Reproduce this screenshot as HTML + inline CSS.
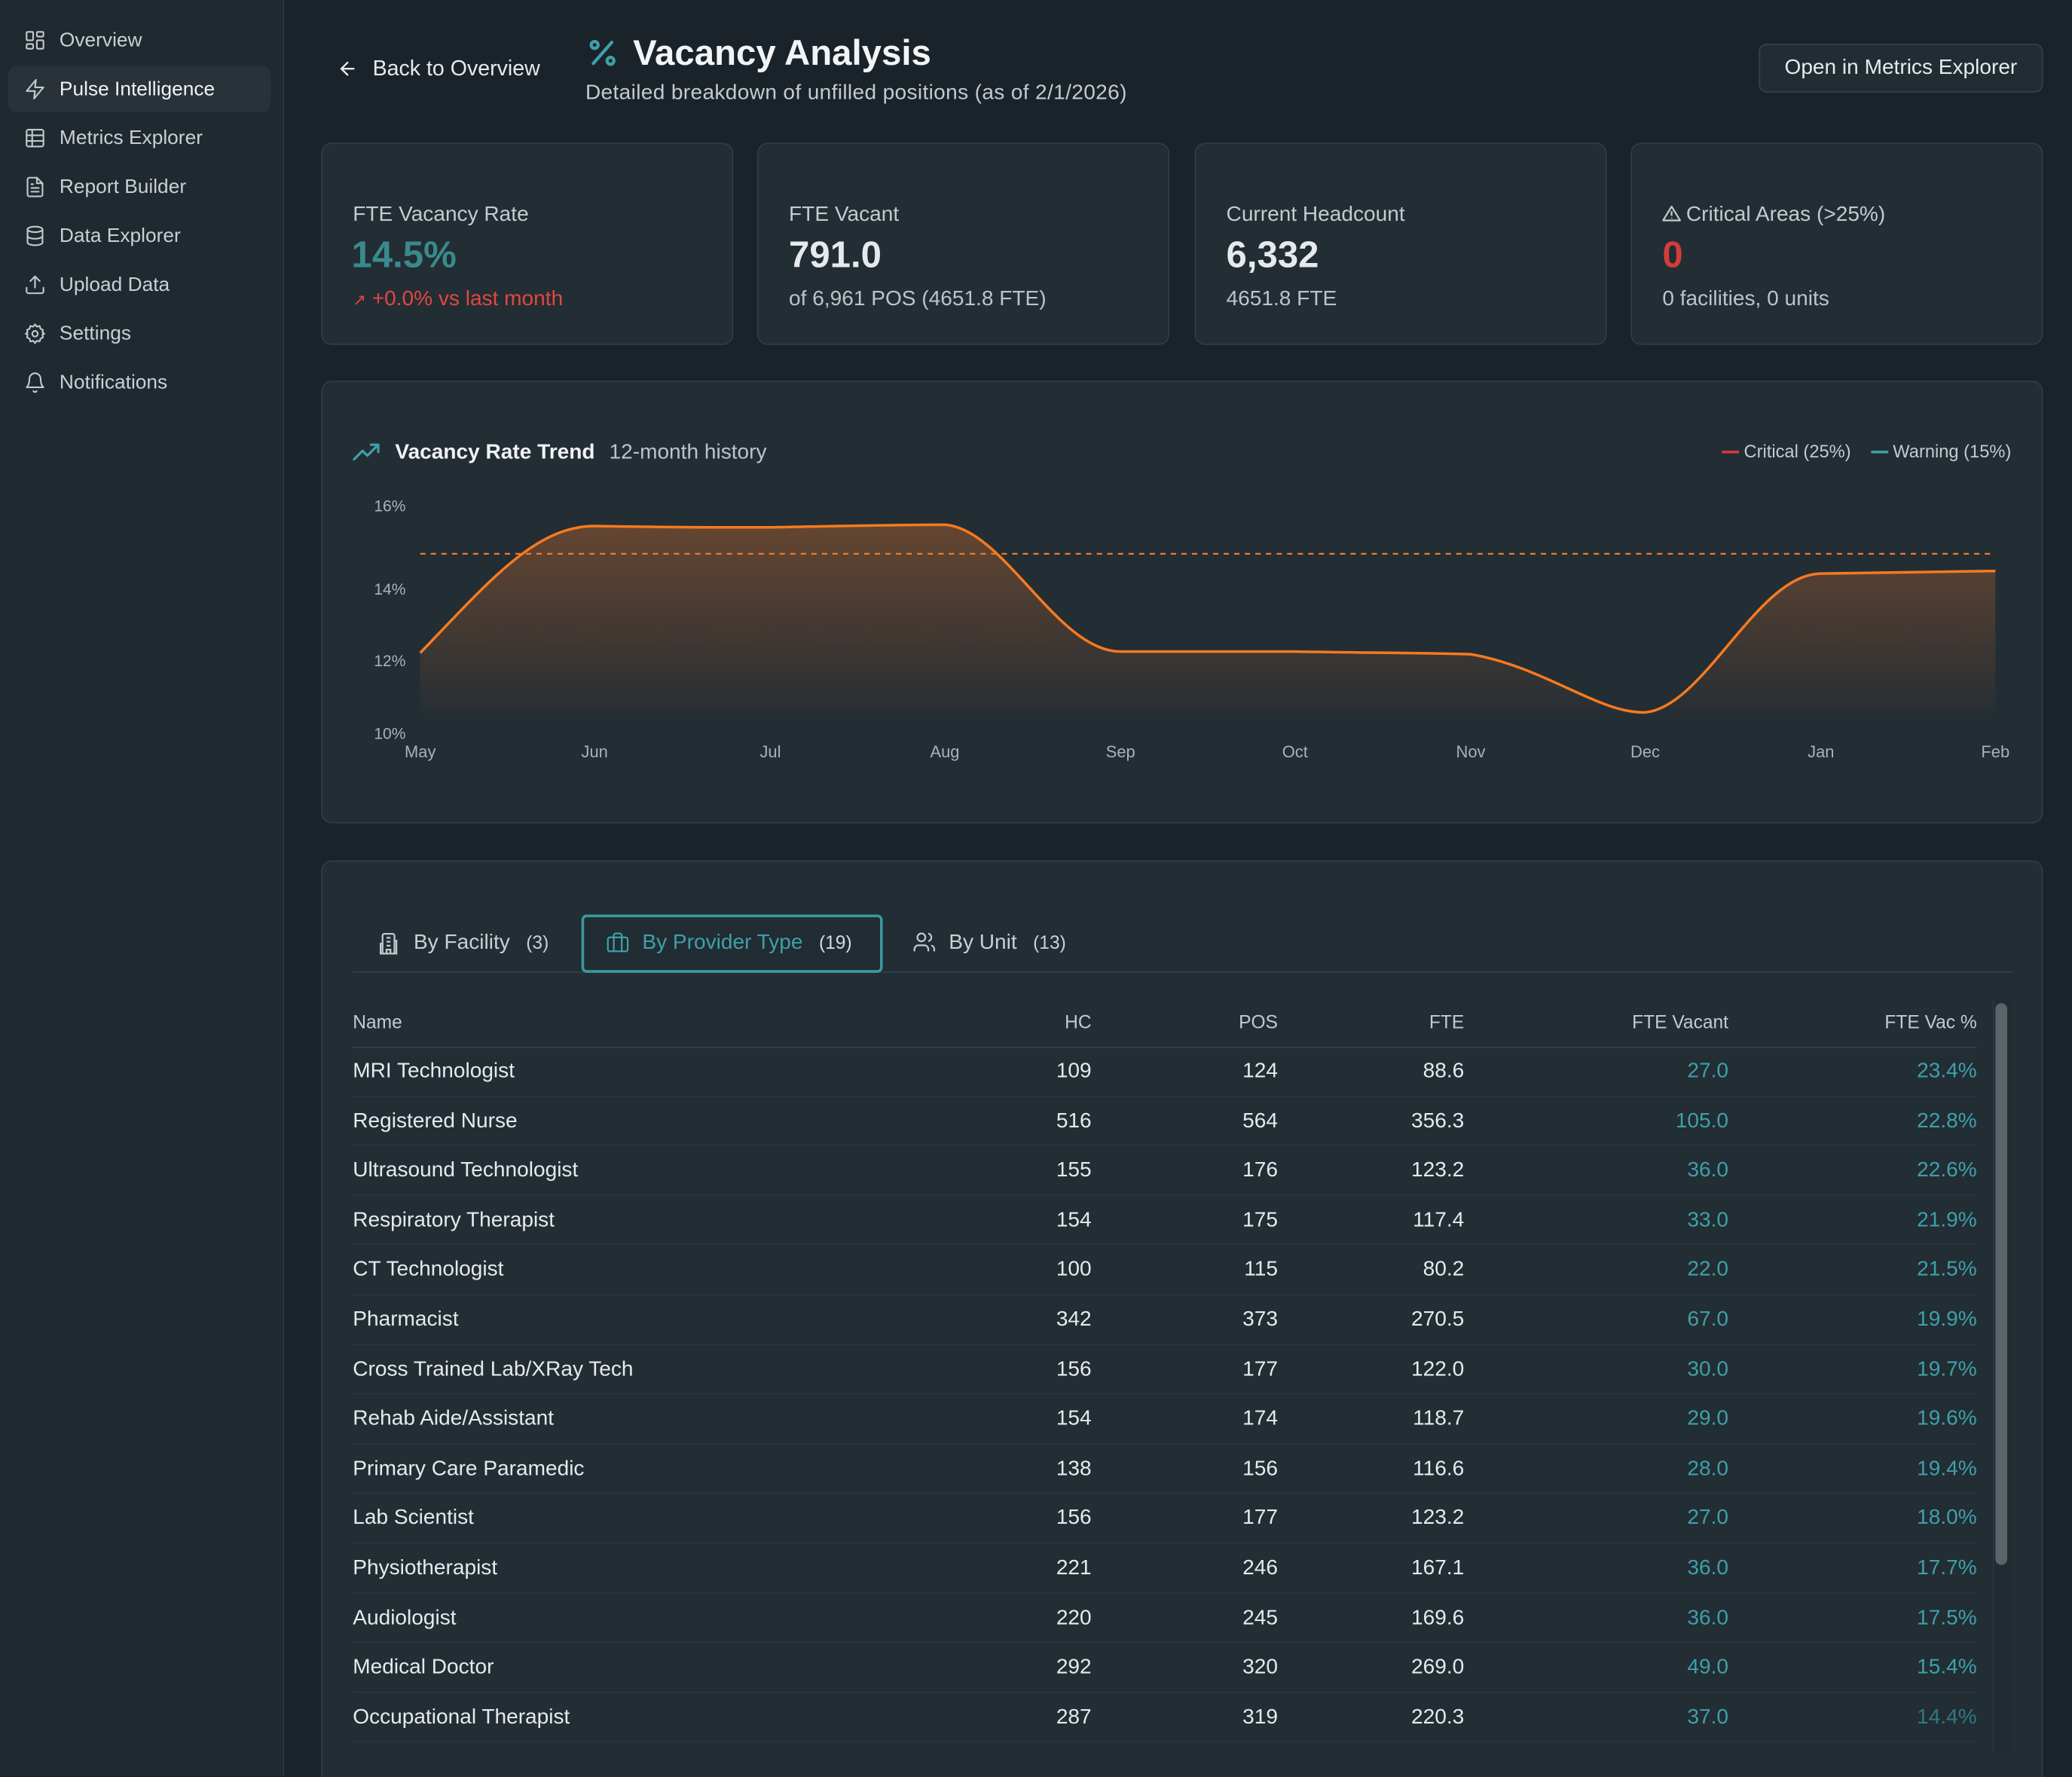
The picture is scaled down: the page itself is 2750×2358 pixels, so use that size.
<!DOCTYPE html>
<html><head><meta charset="utf-8"><style>
*{box-sizing:border-box;margin:0;padding:0}
html,body{width:2750px;height:2358px;overflow:hidden;background:#1b232a}
#w{width:1568px;height:1344px;transform:scale(1.75383);transform-origin:0 0;position:relative;font-family:"Liberation Sans",sans-serif;color:#e6eaec;background:#1b232a}
.a{position:absolute}
.sb{left:0;top:0;width:215px;height:1344px;background:#1f292f;border-right:1px solid #2c373e}
.nav{position:absolute;left:6px;width:199px;height:35px;display:flex;align-items:center;padding-left:12px;font-size:15px;color:#c9d0d4}
.nav svg{width:17px;height:17px;margin-right:10px;fill:none;stroke:#c3cace;stroke-width:1.7;stroke-linecap:round;stroke-linejoin:round}
.nav.act{background:#283238;border-radius:7px;color:#f0f3f4}
.card{background:#232d34;border:1px solid #303c44;border-radius:8px}
.kl{font-size:16px;color:#c3cbcf}
.kv{font-size:28px;font-weight:bold}
.ks{font-size:16px;color:#bcc4c9}
.row{position:absolute;left:267px;width:1229px;height:37.6px;border-bottom:1px solid #2b363d;font-size:16px}
.row span{position:absolute;top:10px}
.c1{left:0}.c2{right:670px}.c3{right:529px}.c4{right:388px}.c5{right:188px;color:#3ea0aa}.c6{right:0;color:#3ea0aa}
.hd span{color:#c3cbcf;font-size:14px}
</style></head><body><div id="w">
<div class="a sb">
 <div class="nav" style="top:13px"><svg viewBox="0 0 24 24"><rect x="3" y="3" width="7" height="9" rx="1"/><rect x="14" y="3" width="7" height="5" rx="1"/><rect x="14" y="12" width="7" height="9" rx="1"/><rect x="3" y="16" width="7" height="5" rx="1"/></svg>Overview</div>
 <div class="nav act" style="top:50px"><svg viewBox="0 0 24 24"><path d="M13 2L3 14h9l-1 8 10-12h-9l1-8z"/></svg>Pulse Intelligence</div>
 <div class="nav" style="top:87px"><svg viewBox="0 0 24 24"><rect x="3" y="3" width="18" height="18" rx="2"/><path d="M3 9h18M3 15h18M9 3v18"/></svg>Metrics Explorer</div>
 <div class="nav" style="top:124px"><svg viewBox="0 0 24 24"><path d="M14 2H6a2 2 0 0 0-2 2v16a2 2 0 0 0 2 2h12a2 2 0 0 0 2-2V8z"/><path d="M14 2v6h6M8 13h8M8 17h8M8 9h2"/></svg>Report Builder</div>
 <div class="nav" style="top:161px"><svg viewBox="0 0 24 24"><ellipse cx="12" cy="5" rx="8" ry="3"/><path d="M4 5v14c0 1.7 3.6 3 8 3s8-1.3 8-3V5M4 12c0 1.7 3.6 3 8 3s8-1.3 8-3"/></svg>Data Explorer</div>
 <div class="nav" style="top:198px"><svg viewBox="0 0 24 24"><path d="M21 15v4a2 2 0 0 1-2 2H5a2 2 0 0 1-2-2v-4M17 8l-5-5-5 5M12 3v12"/></svg>Upload Data</div>
 <div class="nav" style="top:235px"><svg viewBox="0 0 24 24"><circle cx="12" cy="12" r="3"/><path d="M12 2l2 2.5 3-.8.8 3L20.5 8 20 11l2 1-2 1 .5 3-2.7 1.3-.8 3-3-.8L12 22l-2-2.5-3 .8-.8-3L3.5 16 4 13l-2-1 2-1-.5-3 2.7-1.3.8-3 3 .8z"/></svg>Settings</div>
 <div class="nav" style="top:272px"><svg viewBox="0 0 24 24"><path d="M6 8a6 6 0 0 1 12 0c0 7 3 9 3 9H3s3-2 3-9M10.3 21a1.9 1.9 0 0 0 3.4 0"/></svg>Notifications</div>
</div>

<svg class="a" style="left:255px;top:44px" width="16" height="16" viewBox="0 0 24 24" fill="none" stroke="#e6eaec" stroke-width="2" stroke-linecap="round"><path d="M19 12H5M12 19l-7-7 7-7"/></svg>
<div class="a" style="left:282px;top:43px;font-size:16.3px">Back to Overview</div>
<svg class="a" style="left:445px;top:29px" width="22" height="22" viewBox="0 0 22 22" fill="none" stroke="#3ea0aa" stroke-width="2.4" stroke-linecap="round"><path d="M18 3L4 19"/><circle cx="5" cy="5" r="2.6"/><circle cx="17" cy="17" r="2.6"/></svg>
<div class="a" style="left:479px;top:25px;font-size:27px;font-weight:bold;color:#f2f4f5">Vacancy Analysis</div>
<div class="a" style="left:443px;top:62px;font-size:16px;color:#c3cbcf;letter-spacing:.2px">Detailed breakdown of unfilled positions (as of 2/1/2026)</div>
<div class="a" style="left:1331px;top:33px;width:215px;height:37px;border:1px solid #34414a;border-radius:6px;background:#222c33;font-size:16px;text-align:center;line-height:35px">Open in Metrics Explorer</div>

<div class="a card" style="left:243px;top:108px;width:312px;height:153px"></div>
<div class="a kl" style="left:267px;top:154px">FTE Vacancy Rate</div>
<div class="a kv" style="left:266px;top:177px;color:#3a8a8c">14.5%</div>
<div class="a ks" style="left:267px;top:218px;color:#e0483e"><span style="font-size:12px">↗</span> +0.0% vs last month</div>

<div class="a card" style="left:573px;top:108px;width:312px;height:153px"></div>
<div class="a kl" style="left:597px;top:154px">FTE Vacant</div>
<div class="a kv" style="left:597px;top:177px">791.0</div>
<div class="a ks" style="left:597px;top:218px">of 6,961 POS (4651.8 FTE)</div>

<div class="a card" style="left:904px;top:108px;width:312px;height:153px"></div>
<div class="a kl" style="left:928px;top:154px">Current Headcount</div>
<div class="a kv" style="left:928px;top:177px">6,332</div>
<div class="a ks" style="left:928px;top:218px">4651.8 FTE</div>

<div class="a card" style="left:1234px;top:108px;width:312px;height:153px"></div>
<svg class="a" style="left:1258px;top:155px" width="14" height="13" viewBox="0 0 24 22" fill="none" stroke="#c3cbcf" stroke-width="2.2" stroke-linejoin="round"><path d="M12 2L1 20h22z"/><path d="M12 8v6M12 16.5v1"/></svg>
<div class="a kl" style="left:1276px;top:154px">Critical Areas (&gt;25%)</div>
<div class="a kv" style="left:1258px;top:177px;color:#d23c3a">0</div>
<div class="a ks" style="left:1258px;top:218px">0 facilities, 0 units</div>

<div class="a card" style="left:243px;top:288px;width:1303px;height:335px"></div>
<svg class="a" style="left:267px;top:334px" width="22" height="16" viewBox="0 0 24 16" fill="none" stroke="#3ea0aa" stroke-width="2" stroke-linecap="round" stroke-linejoin="round"><path d="M1 14l7-7 4 4 9-9M15 2h6v6"/></svg>
<div class="a" style="left:299px;top:334px;font-size:16px;font-weight:bold;color:#f0f3f4">Vacancy Rate Trend</div>
<div class="a" style="left:461px;top:334px;font-size:16px;color:#bcc4c9">12-month history</div>
<div class="a" style="left:1200px;width:322px;text-align:right;top:334px;font-size:13.5px;color:#c3cbcf"><span style="display:inline-block;width:13px;height:2px;background:#d23c3a;vertical-align:middle"></span> Critical (25%) &nbsp;&nbsp; <span style="display:inline-block;width:13px;height:2px;background:#3ea0aa;vertical-align:middle"></span> Warning (15%)</div>
<div class="a" style="left:283px;top:377px;font-size:12px;color:#a9b2b7;line-height:1">16%</div>
<div class="a" style="left:283px;top:440px;font-size:12px;color:#a9b2b7;line-height:1">14%</div>
<div class="a" style="left:283px;top:494px;font-size:12px;color:#a9b2b7;line-height:1">12%</div>
<div class="a" style="left:283px;top:549px;font-size:12px;color:#a9b2b7;line-height:1">10%</div>
<svg class="a" style="left:0;top:0" width="1568" height="600">
<defs><linearGradient id="g" x1="0" y1="0" x2="0" y2="1"><stop offset="0" stop-color="#f07a2a" stop-opacity=".32"/><stop offset="1" stop-color="#f07a2a" stop-opacity=".02"/></linearGradient></defs>
<path d="M318 494C370 440 405 398 450 398C500 399 540 399 583 399C640 398 680 397 715 397C760 400 800 493 848 493L980 493C1040 494 1080 494 1113 495C1170 505 1210 540 1245 539C1290 535 1330 434 1378 434L1510 432L1510 540L318 540Z" fill="url(#g)"/>
<line x1="318" y1="419" x2="1510" y2="419" stroke="#f07a2a" stroke-width="1.3" stroke-dasharray="4 4"/>
<path d="M318 494C370 440 405 398 450 398C500 399 540 399 583 399C640 398 680 397 715 397C760 400 800 493 848 493L980 493C1040 494 1080 494 1113 495C1170 505 1210 540 1245 539C1290 535 1330 434 1378 434L1510 432" fill="none" stroke="#f57a1f" stroke-width="2"/>
<g font-family="Liberation Sans" font-size="12.5" fill="#a9b2b7" text-anchor="middle">
<text x="318" y="573">May</text><text x="450" y="573">Jun</text><text x="583" y="573">Jul</text><text x="715" y="573">Aug</text><text x="848" y="573">Sep</text><text x="980" y="573">Oct</text><text x="1113" y="573">Nov</text><text x="1245" y="573">Dec</text><text x="1378" y="573">Jan</text><text x="1510" y="573">Feb</text></g>
</svg>

<div class="a card" style="left:243px;top:651px;width:1303px;height:720px"></div>
<div class="a" style="left:267px;top:735px;width:1256px;height:1px;background:#34414a"></div>
<svg class="a" style="left:285px;top:705px" width="18" height="18" viewBox="0 0 24 24" fill="none" stroke="#c3cace" stroke-width="1.7"><path d="M6 22V4a2 2 0 0 1 2-2h8a2 2 0 0 1 2 2v18zM6 12H4v10h2M18 9h2v13h-2M10 6h4M10 10h4M10 14h4M10 22v-4h4v4"/></svg>
<div class="a" style="left:313px;top:705px;font-size:16px;color:#c9d0d4">By Facility <span style="font-size:14px">&nbsp;&nbsp;(3)</span></div>
<div class="a" style="left:440px;top:692px;width:228px;height:44px;border:2px solid #3a9aa3;border-radius:4px;background:#222c33"></div>
<svg class="a" style="left:458px;top:704px" width="19" height="18" viewBox="0 0 24 24" fill="none" stroke="#3ea0aa" stroke-width="1.7"><rect x="2" y="7" width="20" height="14" rx="2"/><path d="M16 21V5a2 2 0 0 0-2-2h-4a2 2 0 0 0-2 2v16"/></svg>
<div class="a" style="left:486px;top:705px;font-size:16px;color:#3ea0aa">By Provider Type <span style="font-size:14px;color:#d5dbde">&nbsp;&nbsp;(19)</span></div>
<svg class="a" style="left:690px;top:704px" width="19" height="18" viewBox="0 0 24 24" fill="none" stroke="#c3cace" stroke-width="1.7"><circle cx="9" cy="7" r="4"/><path d="M2 21v-2a4 4 0 0 1 4-4h6a4 4 0 0 1 4 4v2M16 3.1a4 4 0 0 1 0 7.8M22 21v-2a4 4 0 0 0-3-3.9"/></svg>
<div class="a" style="left:718px;top:705px;font-size:16px;color:#c9d0d4">By Unit <span style="font-size:14px">&nbsp;&nbsp;(13)</span></div>

<div class="row hd" style="top:755px;border-bottom-color:#34414a"><span class="c1">Name</span><span class="c2">HC</span><span class="c3">POS</span><span class="c4">FTE</span><span class="c5" style="color:#c3cbcf">FTE Vacant</span><span class="c6" style="color:#c3cbcf">FTE Vac %</span></div>
<div class="row" style="top:792px"><span class="c1">MRI Technologist</span><span class="c2">109</span><span class="c3">124</span><span class="c4">88.6</span><span class="c5">27.0</span><span class="c6">23.4%</span></div>
<div class="row" style="top:829.6px"><span class="c1">Registered Nurse</span><span class="c2">516</span><span class="c3">564</span><span class="c4">356.3</span><span class="c5">105.0</span><span class="c6">22.8%</span></div>
<div class="row" style="top:867.2px"><span class="c1">Ultrasound Technologist</span><span class="c2">155</span><span class="c3">176</span><span class="c4">123.2</span><span class="c5">36.0</span><span class="c6">22.6%</span></div>
<div class="row" style="top:904.8px"><span class="c1">Respiratory Therapist</span><span class="c2">154</span><span class="c3">175</span><span class="c4">117.4</span><span class="c5">33.0</span><span class="c6">21.9%</span></div>
<div class="row" style="top:942.4px"><span class="c1">CT Technologist</span><span class="c2">100</span><span class="c3">115</span><span class="c4">80.2</span><span class="c5">22.0</span><span class="c6">21.5%</span></div>
<div class="row" style="top:980px"><span class="c1">Pharmacist</span><span class="c2">342</span><span class="c3">373</span><span class="c4">270.5</span><span class="c5">67.0</span><span class="c6">19.9%</span></div>
<div class="row" style="top:1017.6px"><span class="c1">Cross Trained Lab/XRay Tech</span><span class="c2">156</span><span class="c3">177</span><span class="c4">122.0</span><span class="c5">30.0</span><span class="c6">19.7%</span></div>
<div class="row" style="top:1055.2px"><span class="c1">Rehab Aide/Assistant</span><span class="c2">154</span><span class="c3">174</span><span class="c4">118.7</span><span class="c5">29.0</span><span class="c6">19.6%</span></div>
<div class="row" style="top:1092.8px"><span class="c1">Primary Care Paramedic</span><span class="c2">138</span><span class="c3">156</span><span class="c4">116.6</span><span class="c5">28.0</span><span class="c6">19.4%</span></div>
<div class="row" style="top:1130.4px"><span class="c1">Lab Scientist</span><span class="c2">156</span><span class="c3">177</span><span class="c4">123.2</span><span class="c5">27.0</span><span class="c6">18.0%</span></div>
<div class="row" style="top:1168px"><span class="c1">Physiotherapist</span><span class="c2">221</span><span class="c3">246</span><span class="c4">167.1</span><span class="c5">36.0</span><span class="c6">17.7%</span></div>
<div class="row" style="top:1205.6px"><span class="c1">Audiologist</span><span class="c2">220</span><span class="c3">245</span><span class="c4">169.6</span><span class="c5">36.0</span><span class="c6">17.5%</span></div>
<div class="row" style="top:1243.2px"><span class="c1">Medical Doctor</span><span class="c2">292</span><span class="c3">320</span><span class="c4">269.0</span><span class="c5">49.0</span><span class="c6">15.4%</span></div>
<div class="row" style="top:1280.8px"><span class="c1">Occupational Therapist</span><span class="c2">287</span><span class="c3">319</span><span class="c4">220.3</span><span class="c5">37.0</span><span class="c6" style="color:#2f7a80">14.4%</span></div>
<div class="a" style="left:1508px;top:756px;width:14px;height:570px;background:#222b31;border-left:1px solid #2c373e"></div>
<div class="a" style="left:1510px;top:759px;width:9px;height:425px;background:#5a6469;border-radius:5px"></div>
</div></body></html>
